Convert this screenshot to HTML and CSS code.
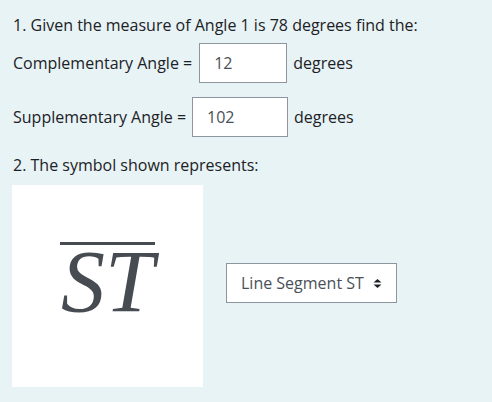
FILE: index.html
```html
<!DOCTYPE html>
<html>
<head>
<meta charset="utf-8">
<link rel="stylesheet" href="styles.css">
</head>
<body>
<div class="quiz">
  <p class="q-title">1. Given the measure of Angle 1 is 78 degrees find the:</p>
  <div class="row">
    <span class="label">Complementary Angle =</span>
    <div class="field field-a">12</div>
    <span class="unit">degrees</span>
  </div>
  <div class="row row-2">
    <span class="label">Supplementary Angle =</span>
    <div class="field field-b">102</div>
    <span class="unit">degrees</span>
  </div>
  <p class="q-title q2">2. The symbol shown represents:</p>
  <div class="answer">
    <div class="pic">
      <div class="seg">
        <div class="bar"></div>
        <div class="letters">ST</div>
      </div>
    </div>
    <div class="select">
      <span>Line Segment ST</span>
      <svg class="caret" width="9" height="9" viewBox="0 0 9 9"><path d="M4.5 0 L8.5 3.5 L0.5 3.5 Z M0.5 5.5 L8.5 5.5 L4.5 9 Z" fill="#1d2125"/></svg>
    </div>
  </div>
</div>
</body>
</html>
```
FILE: styles.css
```css
html, body {
  margin: 0;
  padding: 0;
  background: #e7f3f5;
}
body {
  font-family: "Open Sans", "Noto Sans", sans-serif;
  font-size: 16px;
  color: #1d2125;
}
.quiz {
  padding: 14px 13px 0 13px;
}
.q-title {
  margin: 0;
  line-height: 22px;
}
.row {
  display: flex;
  align-items: center;
  margin-top: 7px;
  height: 40px;
}
.row-2 {
  margin-top: 14px;
}
.field {
  box-sizing: border-box;
  height: 40px;
  border: 1px solid #8f959e;
  background: #fff;
  color: #495057;
  display: flex;
  align-items: center;
  margin: 0 6px 0 7px;
}
.field-a {
  width: 88px;
  padding-left: 14px;
}
.field-b {
  width: 96px;
  margin-left: 6px;
  padding-left: 14px;
}
.q2 {
  margin-top: 17px;
}
.answer {
  display: flex;
  align-items: center;
  margin-top: 9px;
  margin-left: -1px;
}
.pic {
  width: 191px;
  height: 202px;
  background: #fff;
  display: flex;
  justify-content: center;
}
.seg {
  display: flex;
  flex-direction: column;
  align-items: center;
  padding-top: 57px;
}
.bar {
  width: 95px;
  height: 3px;
  background: #474c53;
}
.letters {
  font-family: "Liberation Serif", serif;
  font-style: italic;
  font-size: 88px;
  line-height: 60px;
  color: #474c53;
  margin-top: 7px;
}
.select {
  box-sizing: border-box;
  width: 171px;
  height: 40px;
  margin-left: 23px;
  margin-bottom: 6px;
  border: 1px solid #8f959e;
  background: #fff;
  color: #495057;
  display: flex;
  align-items: center;
  padding-left: 14px;
}
.caret {
  margin-left: 9px;
}
```
